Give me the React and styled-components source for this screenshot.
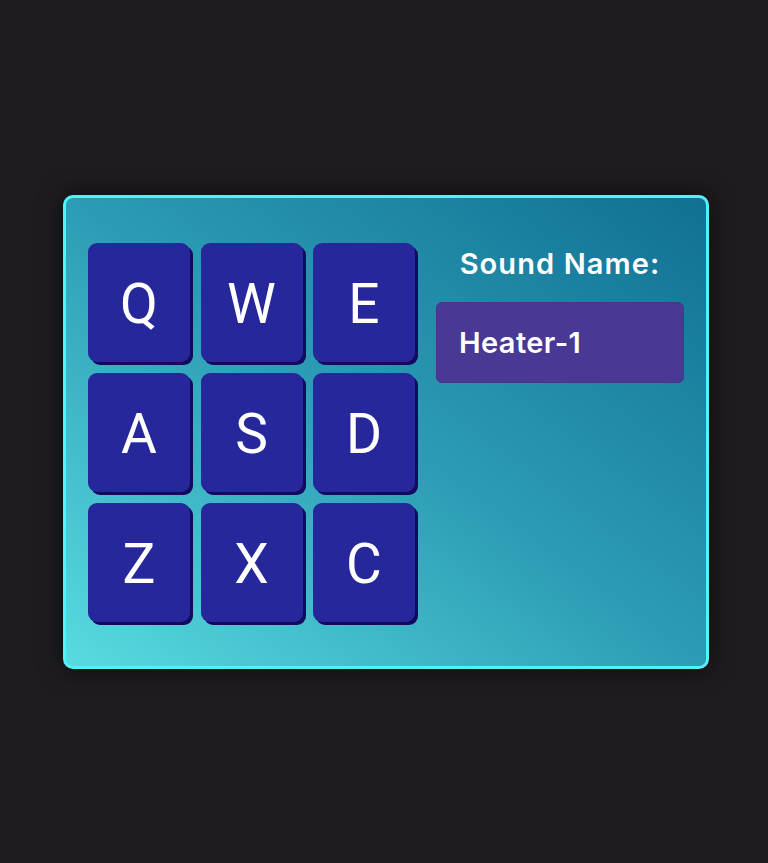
import React from "react";
import styled, { createGlobalStyle } from "styled-components";

const Global = createGlobalStyle`
  html, body { margin: 0; padding: 0; background: #1e1c1e; }
  #root { min-height: 100vh; }
`;

const Page = styled.div`
  min-height: 100vh;
  display: flex;
  align-items: center;
  justify-content: center;
  padding-left: 4px;
  box-sizing: border-box;
`;

const Machine = styled.div`
  width: 646px;
  height: 474px;
  box-sizing: border-box;
  border: 3px solid #4ff3fb;
  border-radius: 10px;
  background: linear-gradient(to top right, #58dbe0 0%, #2c9cb4 50%, #117093 100%);
  box-shadow: 0 0 24px rgba(0, 0, 0, 0.6);
  display: flex;
  align-items: flex-start;
  padding: 45px 22px 0;
  gap: 21px;
`;

const PadGrid = styled.div`
  display: grid;
  grid-template-columns: repeat(3, 102px);
  grid-auto-rows: 119px;
  column-gap: 10.5px;
  row-gap: 11px;
`;

const Pad = styled.button`
  all: unset;
  box-sizing: border-box;
  display: flex;
  align-items: center;
  justify-content: center;
  padding-top: 3px;
  background: #27279c;
  border-radius: 9px;
  box-shadow: 3px 3px 0 #110b5e;
  color: #ffffff;
  font-family: Roboto, "Liberation Sans", sans-serif;
  font-size: 55px;
  font-weight: 400;
  cursor: pointer;
`;

const Side = styled.div`
  width: 248px;
  display: flex;
  flex-direction: column;
  align-items: center;
  padding-top: 3px;
  gap: 20px;
`;

const Label = styled.div`
  color: #ffffff;
  font-family: Inter, "Open Sans", sans-serif;
  font-weight: 600;
  font-size: 29px;
  line-height: 36px;
  letter-spacing: 1.1px;
`;

const Display = styled.div`
  width: 100%;
  height: 81px;
  box-sizing: border-box;
  background: #493894;
  border: 1px solid #43368a;
  border-radius: 6px;
  display: flex;
  align-items: center;
  padding-left: 22px;
  color: #ffffff;
  font-family: Inter, "Open Sans", sans-serif;
  font-weight: 600;
  font-size: 29px;
  letter-spacing: 0.4px;
`;

const keys = ["Q", "W", "E", "A", "S", "D", "Z", "X", "C"];

export default function App() {
  return (
    <>
      <Global />
      <Page>
        <Machine>
          <PadGrid>
            {keys.map((k) => (
              <Pad key={k}>{k}</Pad>
            ))}
          </PadGrid>
          <Side>
            <Label>Sound Name:</Label>
            <Display>Heater-1</Display>
          </Side>
        </Machine>
      </Page>
    </>
  );
}
